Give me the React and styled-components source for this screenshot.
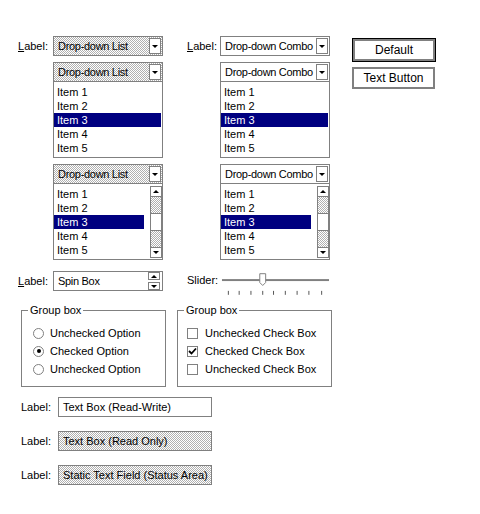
import React from "react";
import styled, { createGlobalStyle, css } from "styled-components";

const GRAY = "#808080";
const NAVY = "#000080";

// fine checkerboard used by classic read-only / status fields
const dither = css`
  background-color: #fff;
  background-image: repeating-conic-gradient(#b0b0b0 0% 25%, #fff 0% 50%);
  background-size: 2px 2px;
`;

const GlobalStyle = createGlobalStyle`
  body {
    margin: 0;
    background: #fff;
    color: #000;
    font-family: "Liberation Sans", Arial, sans-serif;
    font-size: 11px;
  }
`;

const Page = styled.div`
  width: 480px;
  height: 514px;
  box-sizing: border-box;
  padding: 36px 0 0 18px;
`;

const TopArea = styled.div`
  display: flex;
  align-items: flex-start;
`;

const Column = styled.div`
  display: flex;
  flex-direction: column;
  gap: 6px;
  width: ${(p) => p.$width}px;
  margin-left: ${(p) => p.$offset || 0}px;
`;

const FieldRow = styled.div`
  display: flex;
  align-items: ${(p) => p.$align || "center"};
  margin-top: ${(p) => p.$push || 0}px;
`;

const Label = styled.span`
  width: ${(p) => p.$width}px;
  flex: none;
  line-height: 16px;
  white-space: nowrap;
`;

const Indent = styled.div`
  margin-left: ${(p) => p.$by}px;
`;

const DropBox = styled.div`
  box-sizing: border-box;
  width: 110px;
  height: 20px;
  border: 1px solid ${GRAY};
  display: flex;
  align-items: center;
  padding: 0 1px 0 4px;
  ${(p) => (p.$dither ? dither : "background: #fff;")}
`;

const FieldText = styled.span`
  flex: 1;
  min-width: 0;
  overflow: hidden;
  white-space: nowrap;
  line-height: 14px;
  letter-spacing: -0.3px;
`;

const ArrowButton = styled.div`
  box-sizing: border-box;
  width: 12px;
  height: 16px;
  flex: none;
  border: 1px solid ${GRAY};
  background: #fff;
  display: flex;
  align-items: center;
  justify-content: center;
`;

const Arrow = styled.span`
  width: 0;
  height: 0;
  border-left: 3px solid transparent;
  border-right: 3px solid transparent;
  ${(p) =>
    p.$up ? "border-bottom: 3px solid #000;" : "border-top: 3px solid #000;"}
`;

const ListBox = styled.div`
  box-sizing: border-box;
  width: 110px;
  height: 96px;
  border: 1px solid ${GRAY};
  background: #fff;
  display: flex;
  flex-direction: column;
`;

const ListHeader = styled.div`
  height: 18px;
  flex: none;
  border-bottom: 1px solid ${GRAY};
  display: flex;
  align-items: center;
  padding: 0 1px 0 4px;
  ${(p) => (p.$dither ? dither : "background: #fff;")}
`;

const ListBody = styled.div`
  flex: 1;
  min-height: 0;
  display: flex;
`;

const Items = styled.div`
  flex: 1;
  padding: 3px ${(p) => (p.$scroll ? 6 : 1)}px 0 0;
`;

const Item = styled.div`
  height: 14px;
  line-height: 14px;
  padding-left: 3px;
  white-space: nowrap;
  ${(p) => p.$selected && `background: ${NAVY}; color: #fff;`}
`;

const ScrollBar = styled.div`
  width: 12px;
  flex: none;
  box-sizing: border-box;
  padding: 2px 0 1px;
  display: flex;
  flex-direction: column;
`;

const ScrollButton = styled.div`
  height: 11px;
  flex: none;
  box-sizing: border-box;
  border: 1px solid ${GRAY};
  background: #fff;
  display: flex;
  align-items: center;
  justify-content: center;
`;

const ScrollTrack = styled.div`
  flex: 1;
  ${dither};
  border-left: 1px solid ${GRAY};
  border-right: 1px solid ${GRAY};
  display: flex;
  flex-direction: column;
  justify-content: center;
`;

const ScrollThumb = styled.div`
  height: 16px;
  background: #fff;
  border-top: 1px solid ${GRAY};
  border-bottom: 1px solid ${GRAY};
`;

const SpinBox = styled.div`
  box-sizing: border-box;
  width: 110px;
  height: 20px;
  border: 1px solid ${GRAY};
  background: #fff;
  display: flex;
  align-items: center;
  padding: 0 2px 0 4px;
`;

const SpinButtons = styled.div`
  display: flex;
  flex-direction: column;
  gap: 2px;
`;

const SpinButton = styled.div`
  box-sizing: border-box;
  width: 12px;
  height: 8px;
  border: 1px solid ${GRAY};
  display: flex;
  align-items: center;
  justify-content: center;
`;

const ButtonStack = styled.div`
  display: flex;
  flex-direction: column;
  gap: 5px;
  margin-left: 22px;
  margin-top: 2px;
`;

const PushButton = styled.button`
  box-sizing: border-box;
  width: ${(p) => (p.$default ? 84 : 83)}px;
  height: ${(p) => (p.$default ? 24 : 22)}px;
  padding: 0;
  background: #fff;
  color: #000;
  font-family: inherit;
  font-size: 12px;
  border: 2px solid ${GRAY};
  ${(p) =>
    p.$default &&
    css`
      border: 1px solid #000;
      box-shadow: inset 0 0 0 2px ${GRAY};
    `}
`;

const GroupRow = styled.div`
  display: flex;
  align-items: flex-start;
  gap: 11px;
  margin: 8px 0 0 3px;
`;

const GroupBox = styled.fieldset`
  box-sizing: border-box;
  width: ${(p) => p.$width}px;
  min-width: 0;
  margin: 0;
  padding: 0;
  border: 1px solid ${GRAY};
`;

const GroupTitle = styled.legend`
  margin-left: 6px;
  padding: 0 2px;
  line-height: 13px;
`;

const GroupContent = styled.div`
  display: flex;
  flex-direction: column;
  padding: 7px 0 8px ${(p) => p.$inset}px;
`;

const Option = styled.div`
  height: 18px;
  display: flex;
  align-items: center;
  gap: ${(p) => p.$gap}px;
  white-space: nowrap;
`;

const Radio = styled.span`
  box-sizing: border-box;
  width: 11px;
  height: 11px;
  border-radius: 50%;
  border: 1px solid ${GRAY};
  background: #fff;
  display: flex;
  align-items: center;
  justify-content: center;
  &::after {
    content: "";
    width: 4px;
    height: 4px;
    border-radius: 50%;
    background: ${(p) => (p.$checked ? "#000" : "transparent")};
  }
`;

const CheckBox = styled.span`
  box-sizing: border-box;
  width: 11px;
  height: 11px;
  border: 1px solid ${GRAY};
  background: #fff;
  display: flex;
  align-items: center;
  justify-content: center;
`;

const FieldList = styled.div`
  display: flex;
  flex-direction: column;
  gap: 14px;
  margin: 10px 0 0 3px;
`;

const TextField = styled.div`
  box-sizing: border-box;
  width: 154px;
  height: 20px;
  border: 1px solid ${GRAY};
  padding: 0 4px;
  display: flex;
  align-items: center;
  white-space: nowrap;
  ${(p) => (p.$shaded ? dither : "background: #fff;")}
`;

const ITEMS = ["Item 1", "Item 2", "Item 3", "Item 4", "Item 5"];

function Mnemonic() {
  return (
    <>
      <u>L</u>abel:
    </>
  );
}

function Dropdown({ text, dither }) {
  return (
    <DropBox $dither={dither}>
      <FieldText>{text}</FieldText>
      <ArrowButton>
        <Arrow />
      </ArrowButton>
    </DropBox>
  );
}

function ListCombo({ text, dither, scroll }) {
  return (
    <ListBox>
      <ListHeader $dither={dither}>
        <FieldText>{text}</FieldText>
        <ArrowButton>
          <Arrow />
        </ArrowButton>
      </ListHeader>
      <ListBody>
        <Items $scroll={scroll}>
          {ITEMS.map((it) => (
            <Item key={it} $selected={it === "Item 3"}>
              {it}
            </Item>
          ))}
        </Items>
        {scroll && (
          <ScrollBar>
            <ScrollButton>
              <Arrow $up />
            </ScrollButton>
            <ScrollTrack>
              <ScrollThumb />
            </ScrollTrack>
            <ScrollButton>
              <Arrow />
            </ScrollButton>
          </ScrollBar>
        )}
      </ListBody>
    </ListBox>
  );
}

function Slider() {
  const ticks = [8, 19, 31, 43, 54, 66, 78, 90, 103];
  return (
    <svg width="112" height="24" viewBox="0 0 112 24">
      <rect x="2" y="7" width="109" height="2" fill={GRAY} />
      <path
        d="M40.5 1.5 H46.5 V10.5 L43.5 13.5 L40.5 10.5 Z"
        fill="#fff"
        stroke={GRAY}
      />
      {ticks.map((x) => (
        <rect key={x} x={x} y="19" width="1" height="4" fill="#555" />
      ))}
    </svg>
  );
}

function Check() {
  return (
    <svg width="9" height="9" viewBox="0 0 9 9">
      <path d="M1 4 L3.5 6.5 L8 1.5" fill="none" stroke="#000" strokeWidth="1.8" />
    </svg>
  );
}

export default function App() {
  return (
    <Page>
      <GlobalStyle />
      <TopArea>
        <Column $width={145}>
          <FieldRow>
            <Label $width={35}>
              <Mnemonic />
            </Label>
            <Dropdown text="Drop-down List" dither />
          </FieldRow>
          <Indent $by={35}>
            <ListCombo text="Drop-down List" dither />
          </Indent>
          <Indent $by={35}>
            <ListCombo text="Drop-down List" dither scroll />
          </Indent>
          <FieldRow $push={5}>
            <Label $width={35}>
              <Mnemonic />
            </Label>
            <SpinBox>
              <FieldText>Spin Box</FieldText>
              <SpinButtons>
                <SpinButton>
                  <Arrow $up />
                </SpinButton>
                <SpinButton>
                  <Arrow />
                </SpinButton>
              </SpinButtons>
            </SpinBox>
          </FieldRow>
        </Column>

        <Column $width={143} $offset={24}>
          <FieldRow>
            <Label $width={33}>
              <Mnemonic />
            </Label>
            <Dropdown text="Drop-down Combo" />
          </FieldRow>
          <Indent $by={33}>
            <ListCombo text="Drop-down Combo" />
          </Indent>
          <Indent $by={33}>
            <ListCombo text="Drop-down Combo" scroll />
          </Indent>
          <FieldRow $push={6} $align="flex-start">
            <Label $width={33}>Slider:</Label>
            <Slider />
          </FieldRow>
        </Column>

        <ButtonStack>
          <PushButton $default>Default</PushButton>
          <PushButton>Text Button</PushButton>
        </ButtonStack>
      </TopArea>

      <GroupRow>
        <GroupBox $width={145}>
          <GroupTitle>Group box</GroupTitle>
          <GroupContent $inset={11}>
            <Option $gap={6}>
              <Radio />
              Unchecked Option
            </Option>
            <Option $gap={6}>
              <Radio $checked />
              Checked Option
            </Option>
            <Option $gap={6}>
              <Radio />
              Unchecked Option
            </Option>
          </GroupContent>
        </GroupBox>
        <GroupBox $width={155}>
          <GroupTitle>Group box</GroupTitle>
          <GroupContent $inset={9}>
            <Option $gap={7}>
              <CheckBox />
              Unchecked Check Box
            </Option>
            <Option $gap={7}>
              <CheckBox>
                <Check />
              </CheckBox>
              Checked Check Box
            </Option>
            <Option $gap={7}>
              <CheckBox />
              Unchecked Check Box
            </Option>
          </GroupContent>
        </GroupBox>
      </GroupRow>

      <FieldList>
        <FieldRow>
          <Label $width={37}>Label:</Label>
          <TextField>Text Box (Read-Write)</TextField>
        </FieldRow>
        <FieldRow>
          <Label $width={37}>Label:</Label>
          <TextField $shaded>Text Box (Read Only)</TextField>
        </FieldRow>
        <FieldRow>
          <Label $width={37}>Label:</Label>
          <TextField $shaded>Static Text Field (Status Area)</TextField>
        </FieldRow>
      </FieldList>
    </Page>
  );
}
